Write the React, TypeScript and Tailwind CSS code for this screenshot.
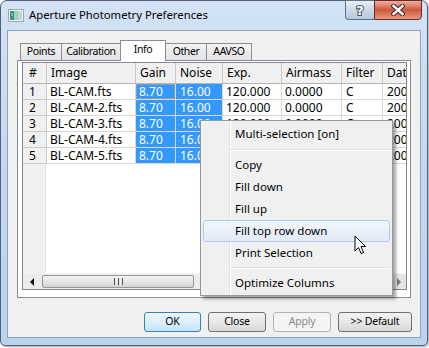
import React from 'react';

const rows = [
  ['1', 'BL-CAM.fts'],
  ['2', 'BL-CAM-2.fts'],
  ['3', 'BL-CAM-3.fts'],
  ['4', 'BL-CAM-4.fts'],
  ['5', 'BL-CAM-5.fts'],
];

function AppIcon() {
  return (
    <svg width="16" height="13" viewBox="0 0 16 13">
      <rect x="0.5" y="0.5" width="15" height="12" fill="#eef2f4" stroke="#9aa8b0" />
      <rect x="2" y="2" width="4" height="9" fill="#3f8f8a" />
      <rect x="6" y="2" width="4" height="9" fill="#9fd0b8" />
      <rect x="10" y="2" width="4" height="9" fill="#c9d2d6" />
      <rect x="3" y="4" width="2" height="3" fill="#6fb9b0" />
    </svg>
  );
}

function Cursor() {
  return (
    <svg width="14" height="21" viewBox="0 0 14 21">
      <path d="M1 1 L1 16 L4.5 12.5 L7 18.5 L9.5 17.5 L7 11.5 L11.5 11.5 Z" fill="#ffffff" stroke="#000000" strokeWidth="1" strokeLinejoin="miter" />
    </svg>
  );
}

function HeaderCell({ w, children, last }: { w: string; children?: React.ReactNode; last?: boolean }) {
  return (
    <div className={`${w} shrink-0 h-full ${last ? '' : 'border-r'} border-[#c9c9c9] pl-[4px] whitespace-nowrap overflow-hidden leading-[20px]`}>
      {children}
    </div>
  );
}

export default function App() {
  return (
    <div className="relative w-[429px] h-[348px] bg-white font-['Noto_Sans',sans-serif] text-black overflow-hidden">
      <div className="w-[428px] h-[346px] flex flex-col rounded-t-[7px] rounded-b-[5px] border border-[#4f6178] bg-gradient-to-b from-[#d3e3f5] via-[#c3d7ef] to-[#bcd3ee] px-[6px] pb-[7px] shadow-[1px_1px_2px_rgba(0,0,0,0.35)]">
        {/* title bar */}
        <div className="h-[29px] shrink-0 flex items-start">
          <div className="mt-[8px] ml-[1px]">
            <AppIcon />
          </div>
          <div className="ml-[5px] mt-[6px] text-[11.3px] leading-[16px] text-black">Aperture Photometry Preferences</div>
          <div className="ml-auto flex -mt-px -mr-[1px]">
            <div className="w-[29px] h-[20px] border border-[#5f7188] border-r-0 rounded-bl-[4px] bg-gradient-to-b from-[#e8eff7] via-[#cbd8e8] to-[#b6c6da] flex items-center justify-center">
              <svg width="12" height="14" viewBox="0 0 12 14">
                <text x="6" y="12" textAnchor="middle" fontSize="13" fontWeight="bold" fontFamily="DejaVu Sans, sans-serif" fill="#ffffff" stroke="#4a5566" strokeWidth="2" paintOrder="stroke">?</text>
              </svg>
            </div>
            <div className="w-[48px] h-[20px] border border-[#6b2a1f] rounded-br-[4px] bg-gradient-to-b from-[#eab1a2] via-[#d0553d] to-[#e39a80] flex items-center justify-center">
              <svg width="14" height="12" viewBox="0 0 14 12">
                <path d="M2.5 2 L11.5 10 M11.5 2 L2.5 10" stroke="#3f2a2a" strokeWidth="4.5" strokeLinecap="square" />
                <path d="M2.5 2 L11.5 10 M11.5 2 L2.5 10" stroke="#ffffff" strokeWidth="2.4" strokeLinecap="square" />
              </svg>
            </div>
          </div>
        </div>

        {/* client */}
        <div className="flex-1 border border-[#8ea4bf] bg-[#f0f0f0] flex flex-col">
          <div className="ml-[9px] mt-[9px] w-[394px]">
            {/* tabs */}
            <div className="flex items-end h-[20px] pl-[3px] text-[10.5px] tracking-[-0.4px]">
              <div className="w-[42px] h-[17px] border border-b-0 border-[#898c95] bg-gradient-to-b from-[#f3f3f3] to-[#e3e3e3] flex items-center justify-center">Points</div>
              <div className="w-[59px] h-[17px] border border-b-0 border-l-0 border-[#898c95] bg-gradient-to-b from-[#f3f3f3] to-[#e3e3e3] flex items-center justify-center">Calibration</div>
              <div className="relative z-10 w-[46px] h-[21px] -mb-px -ml-px border border-b-0 border-[#898c95] bg-white flex items-start justify-center pt-[1px]">Info</div>
              <div className="w-[41px] h-[17px] border border-b-0 border-l-0 border-[#898c95] bg-gradient-to-b from-[#f3f3f3] to-[#e3e3e3] flex items-center justify-center">Other</div>
              <div className="w-[45px] h-[17px] border border-b-0 border-l-0 border-[#898c95] bg-gradient-to-b from-[#f3f3f3] to-[#e3e3e3] flex items-center justify-center">AAVSO</div>
            </div>
            {/* pane */}
            <div className="h-[238px] border border-[#898c95] bg-white pt-[1px] pl-[4px] pr-[3px] pb-[7px]">
              <div className="h-full border border-[#828790] flex flex-col overflow-hidden text-[12px]">
                {/* header */}
                <div className="h-[21px] shrink-0 flex border-b border-[#b5b5b5] bg-[#f0f0f0]">
                  <div className="w-[24px] shrink-0 h-full border-r border-[#c9c9c9] pl-[6px] leading-[20px]">#</div>
                  <HeaderCell w="w-[89px]">Image</HeaderCell>
                  <HeaderCell w="w-[40px]">Gain</HeaderCell>
                  <HeaderCell w="w-[47px]">Noise</HeaderCell>
                  <HeaderCell w="w-[59px]">Exp.</HeaderCell>
                  <HeaderCell w="w-[60px]">Airmass</HeaderCell>
                  <HeaderCell w="w-[41px]">Filter</HeaderCell>
                  <HeaderCell w="w-[90px]" last>Date</HeaderCell>
                </div>
                {rows.map(([n, name], i) => (
                  <div key={n} className="h-[16px] shrink-0 flex leading-[15px]">
                    <div className="w-[24px] shrink-0 h-full bg-[#f0f0f0] border-r border-b border-[#c9c9c9] pl-[6px]">{n}</div>
                    <div className="w-[89px] shrink-0 h-full border-r border-b border-[#d8d8d8] pl-[3px] whitespace-nowrap">{name}</div>
                    <div className={`w-[40px] shrink-0 h-full border-r border-b border-[#d8d8d8] bg-[#3399ff] text-white whitespace-nowrap ${i === 0 ? 'relative' : ''} pl-[3px]`}>
                      {i === 0 && <div className="absolute inset-0 border border-dotted border-[#e8a050]" />}
                      8.70
                    </div>
                    <div className="w-[47px] shrink-0 h-full border-r border-b border-[#d8d8d8] bg-[#3399ff] text-white pl-[4px] whitespace-nowrap">16.00</div>
                    <div className="w-[59px] shrink-0 h-full border-r border-b border-[#d8d8d8] pl-[3px] whitespace-nowrap">120.000</div>
                    <div className="w-[60px] shrink-0 h-full border-r border-b border-[#d8d8d8] pl-[3px] whitespace-nowrap">0.0000</div>
                    <div className="w-[41px] shrink-0 h-full border-r border-b border-[#d8d8d8] pl-[4px] whitespace-nowrap">C</div>
                    <div className="w-[90px] shrink-0 h-full border-b border-[#d8d8d8] pl-[4px] whitespace-nowrap">2009-08-1{i + 2}</div>
                  </div>
                ))}
                {/* filler */}
                <div className="flex-1 flex">
                  <div className="w-[23px] shrink-0 bg-[#f0f0f0] border-r border-[#e4e4e4]" />
                  <div className="flex-1" />
                </div>
                {/* h scrollbar */}
                <div className="h-[16px] shrink-0 flex bg-[#ececec] border-t border-[#f4f4f4]">
                  <div className="w-[18px] shrink-0 flex items-center justify-center">
                    <svg width="5" height="8" viewBox="0 0 5 8"><path d="M4 0 L0 4 L4 8 Z" fill="#111" /></svg>
                  </div>
                  <div className="w-[152px] shrink-0 ml-px my-px rounded-[2px] border border-[#959595] bg-gradient-to-b from-[#f4f4f4] via-[#e6e6e6] to-[#d2d2d2] flex items-center justify-center gap-[1px]">
                    <div className="w-[1px] h-[7px] bg-[#555]" />
                    <div className="w-[1px] h-[7px] bg-[#eee]" />
                    <div className="w-[1px] h-[7px] bg-[#555]" />
                    <div className="w-[1px] h-[7px] bg-[#eee]" />
                    <div className="w-[1px] h-[7px] bg-[#555]" />
                  </div>
                  <div className="flex-1" />
                  <div className="w-[16px] shrink-0 flex items-center justify-center bg-[#e4e4e4]">
                    <svg width="5" height="8" viewBox="0 0 5 8"><path d="M1 0 L5 4 L1 8 Z" fill="#777" /></svg>
                  </div>
                </div>
              </div>
            </div>
          </div>

          {/* buttons */}
          <div className="mt-[14px] flex justify-end gap-[7px] pr-[8px] text-[10.5px] tracking-[-0.2px]">
            <div className="w-[57px] h-[20px] rounded-[3px] border border-[#3c7fb1] bg-gradient-to-b from-[#ecf6fd] via-[#dcf0fc] to-[#bfe4fa] flex items-center justify-center">OK</div>
            <div className="w-[58px] h-[20px] rounded-[3px] border border-[#707070] bg-gradient-to-b from-[#f3f3f3] via-[#e8e8e8] to-[#d6d6d6] flex items-center justify-center">Close</div>
            <div className="w-[58px] h-[20px] rounded-[3px] border border-[#b0b4b7] bg-[#f4f4f4] text-[#8a8a8a] flex items-center justify-center">Apply</div>
            <div className="w-[74px] h-[20px] rounded-[3px] border border-[#707070] bg-gradient-to-b from-[#f3f3f3] via-[#e8e8e8] to-[#d6d6d6] flex items-center justify-center">&gt;&gt; Default</div>
          </div>
        </div>
      </div>

      {/* context menu */}
      <div className="absolute left-[200px] top-[120px] w-[193px] h-[176px] border border-[#979797] bg-[#f0f0f0] shadow-[3px_3px_3px_rgba(0,0,0,0.35)] pt-[2px] px-[2px] text-[11.5px]">
        <div className="absolute left-[28px] top-[1px] bottom-[1px] w-[1px] bg-[#e2e3e3]" />
        <div className="absolute left-[29px] top-[1px] bottom-[1px] w-[1px] bg-white" />
        <div className="relative h-[22px] pl-[32px] leading-[22px]">Multi-selection [on]</div>
        <div className="relative h-[9px] flex flex-col justify-center pl-[27px]">
          <div className="h-[1px] bg-[#e0e0e0]" />
          <div className="h-[1px] bg-white" />
        </div>
        <div className="relative h-[22px] pl-[32px] leading-[22px]">Copy</div>
        <div className="relative h-[22px] pl-[32px] leading-[22px]">Fill down</div>
        <div className="relative h-[22px] pl-[32px] leading-[22px]">Fill up</div>
        <div className="relative h-[22px] pl-[31px] leading-[20px] rounded-[3px] border border-[#aecbef] bg-gradient-to-b from-[#f2f6fc] to-[#e2ebf7]">Fill top row down</div>
        <div className="relative h-[22px] pl-[32px] leading-[22px]">Print Selection</div>
        <div className="relative h-[8px] flex flex-col justify-center pl-[27px]">
          <div className="h-[1px] bg-[#e0e0e0]" />
          <div className="h-[1px] bg-white" />
        </div>
        <div className="relative h-[22px] pl-[32px] leading-[22px]">Optimize Columns</div>
      </div>

      <div className="absolute left-[354px] top-[235px]">
        <Cursor />
      </div>
    </div>
  );
}
